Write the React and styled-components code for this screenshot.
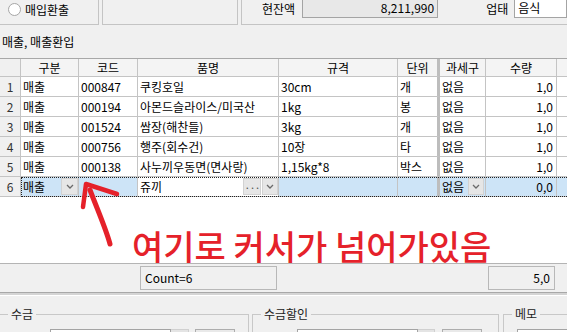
import React from "react";
import styled, { createGlobalStyle } from "styled-components";

const GlobalStyle = createGlobalStyle`
  html, body {
    margin: 0;
    padding: 0;
    background: #f0f0f0;
  }
  body {
    font-family: "Noto Sans CJK KR", "Liberation Sans", sans-serif;
    font-size: 12px;
    color: #000;
  }
`;

const COLS = "58px 59px 141px 119px 42px 46px 71px 30px";

const Page = styled.div`
  width: 567px;
  height: 332px;
  overflow: hidden;
  display: flex;
  flex-direction: column;
  background: #f0f0f0;
`;

const TopStrip = styled.div`
  display: flex;
  gap: 3px;
  height: 25px;
  flex: none;
`;

const TopBox = styled.div`
  box-sizing: border-box;
  height: 25px;
  width: ${(p) => (p.$w ? `${p.$w}px` : "auto")};
  flex: ${(p) => (p.$w ? "none" : "1")};
  border-bottom: 1px solid #c4c4c4;
  border-right: ${(p) => (p.$noRight ? "none" : "1px solid #c4c4c4")};
  border-left: ${(p) => (p.$noLeft ? "none" : "1px solid #c4c4c4")};
  display: flex;
  align-items: center;
  padding: 0 0 ${(p) => p.$pb || 0}px ${(p) => p.$pl || 0}px;
`;

const Radio = styled.span`
  width: 11px;
  height: 11px;
  border-radius: 50%;
  border: 1px solid #a6a6a6;
  background: #fff;
  margin-right: 4px;
`;

const Label = styled.span`
  white-space: nowrap;
  margin-left: ${(p) => p.$ml || 0}px;
  margin-right: ${(p) => p.$mr || 0}px;
`;

const TopInput = styled.div`
  box-sizing: border-box;
  height: 20px;
  width: ${(p) => (p.$w ? `${p.$w}px` : "auto")};
  flex: ${(p) => (p.$w ? "none" : "1")};
  border: 1px solid #a4a4a4;
  background: ${(p) => (p.$gray ? "#e8e8e8" : "#fff")};
  text-align: ${(p) => (p.$right ? "right" : "left")};
  padding: 0 3px;
  line-height: 18px;
`;

const SectionTitle = styled.div`
  height: 33px;
  line-height: 34px;
  padding-left: 2px;
  flex: none;
`;

const GridArea = styled.div`
  position: relative;
  box-sizing: border-box;
  height: 205px;
  flex: none;
  background: #fff;
  border-top: 1px solid #a8a8a8;
  overflow: hidden;
`;

const Row = styled.div`
  display: flex;
  height: ${(p) => p.$h}px;
`;

const RowNum = styled.div`
  box-sizing: border-box;
  width: 21px;
  flex: none;
  background: #f0f0f0;
  border-right: 1px solid #c4c4c4;
  border-bottom: 1px solid #c4c4c4;
  text-align: center;
  color: #333;
  line-height: 19px;
`;

const Cells = styled.div`
  display: grid;
  grid-template-columns: ${COLS};
  flex: none;
  background: ${(p) => p.$bg || "transparent"};
  outline: ${(p) => (p.$focus ? "1px dotted #222" : "none")};
  outline-offset: -1px;
`;

const Cell = styled.div`
  box-sizing: border-box;
  display: flex;
  align-items: center;
  justify-content: ${(p) =>
    p.$align === "right" ? "flex-end" : p.$align === "center" ? "center" : "flex-start"};
  padding: ${(p) => (p.$align === "right" ? "0 3px 0 2px" : p.$btn ? "0 0 0 2px" : "0 2px")};
  border-right: ${(p) => (p.$thick ? "3px solid #bdbdbd" : "1px solid #c4c4c4")};
  border-bottom: 1px solid #c4c4c4;
  background: ${(p) => p.$bg || "transparent"};
  white-space: nowrap;
  overflow: hidden;
  min-width: 0;
`;

const HeadCell = styled(Cell)`
  background: #f4f4f4;
  justify-content: center;
`;

const CellText = styled.span`
  flex: 1;
  overflow: hidden;
`;

const DropBtn = styled.span`
  box-sizing: border-box;
  flex: none;
  width: ${(p) => p.$w || 17}px;
  height: 17px;
  margin-left: ${(p) => p.$ml || 0}px;
  margin-right: ${(p) => p.$mr || 0}px;
  background: #e6e6e6;
  border: 1px solid #d2d2d2;
  display: flex;
  align-items: center;
  justify-content: center;
  color: #555;
  font-size: 11px;
  letter-spacing: -1px;
`;

const Chevron = () => (
  <svg width="8" height="5" viewBox="0 0 8 5">
    <polyline points="1,1 4,4 7,1" fill="none" stroke="#6a6a6a" strokeWidth="1.3" />
  </svg>
);

const Annotation = styled.div`
  position: absolute;
  left: 132px;
  top: 172px;
  font-size: 34px;
  line-height: 30px;
  color: #e5212a;
  font-weight: 500;
  white-space: nowrap;
`;

const ArrowSvg = styled.svg`
  position: absolute;
  left: 0;
  top: 0;
`;

const FooterBar = styled.div`
  display: flex;
  box-sizing: border-box;
  height: 28px;
  flex: none;
  border-top: 1px solid #b4b4b4;
  padding-top: 2px;
`;

const FooterCells = styled.div`
  display: grid;
  grid-template-columns: ${COLS};
  margin-left: 21px;
`;

const SumBox = styled.div`
  box-sizing: border-box;
  height: 24px;
  margin: 0 2px;
  border: 1px solid #b8b8b8;
  line-height: 22px;
  padding: 0 4px;
  text-align: ${(p) => (p.$right ? "right" : "left")};
  grid-column: ${(p) => p.$col};
`;

const Divider = styled.div`
  height: 2px;
  flex: none;
  margin-top: 1px;
  border-top: 1px solid #a8a8a8;
  border-bottom: 1px solid #fff;
  background: #d4d4d4;
`;

const Groups = styled.div`
  display: flex;
  margin-top: 10px;
  margin-left: -2px;
`;

const Group = styled.fieldset`
  box-sizing: border-box;
  margin: 0 ${(p) => p.$mr || 0}px 0 0;
  width: ${(p) => (p.$w ? `${p.$w}px` : "auto")};
  flex: ${(p) => (p.$w ? "none" : "1")};
  min-width: 0;
  height: 80px;
  border: 1px solid #c8c8c8;
  padding: 7px 0 0 ${(p) => p.$pl || 8}px;
`;

const Legend = styled.legend`
  padding: 0 3px;
  margin-left: 0;
  line-height: 16px;
  color: #222;
`;

const FieldRow = styled.div`
  display: flex;
  align-items: center;
  padding-left: ${(p) => p.$pl || 0}px;
`;

const FieldInput = styled.div`
  box-sizing: border-box;
  height: 20px;
  width: ${(p) => (p.$w ? `${p.$w}px` : "auto")};
  flex: ${(p) => (p.$w ? "none" : "1")};
  border: 1px solid #a4a4a4;
  background: #fff;
  padding: 0 3px;
  line-height: 18px;
  white-space: nowrap;
`;

const FieldDrop = styled.div`
  box-sizing: border-box;
  width: ${(p) => p.$w}px;
  height: 20px;
  background: #e4e4e4;
  border: 1px solid #d0d0d0;
  border-left: none;
`;

const FieldButton = styled.div`
  box-sizing: border-box;
  width: 40px;
  height: 20px;
  margin-left: ${(p) => p.$ml}px;
  border: 1px solid #adadad;
  background: #e9e9e9;
`;

const rows = [
  ["매출", "000847", "쿠킹호일", "30cm", "개", "없음", "1,0"],
  ["매출", "000194", "아몬드슬라이스/미국산", "1kg", "봉", "없음", "1,0"],
  ["매출", "001524", "쌈장(해찬들)", "3kg", "개", "없음", "1,0"],
  ["매출", "000756", "행주(회수건)", "10장", "타", "없음", "1,0"],
  ["매출", "000138", "사누끼우동면(면사랑)", "1,15kg*8", "박스", "없음", "1,0"],
];

const headers = ["구분", "코드", "품명", "규격", "단위", "과세구", "수량", ""];

export default function App() {
  return (
    <Page>
      <GlobalStyle />
      <TopStrip>
        <TopBox $w={99} $noLeft $pl={8} $pb={6}>
          <Radio />
          <Label>매입환출</Label>
        </TopBox>
        <TopBox $w={136} />
        <TopBox $noRight $pl={20} $pb={8}>
          <Label $mr={7}>현잔액</Label>
          <TopInput $w={136} $gray $right>
            8,211,990
          </TopInput>
          <Label $ml={48} $mr={6}>
            업태
          </Label>
          <TopInput>음식</TopInput>
        </TopBox>
      </TopStrip>

      <SectionTitle>매출, 매출환입</SectionTitle>

      <GridArea>
        <Row $h={18}>
          <RowNum />
          <Cells>
            {headers.map((h, i) => (
              <HeadCell key={i} $thick={i === 4}>
                {h}
              </HeadCell>
            ))}
          </Cells>
        </Row>
        {rows.map((r, i) => (
          <Row $h={20} key={i}>
            <RowNum>{i + 1}</RowNum>
            <Cells>
              {r.map((v, j) => (
                <Cell key={j} $thick={j === 4} $align={j === 6 ? "right" : "left"}>
                  {v}
                </Cell>
              ))}
              <Cell />
            </Cells>
          </Row>
        ))}
        <Row $h={20}>
          <RowNum>6</RowNum>
          <Cells $bg="#cde4f7" $focus>
            <Cell $btn>
              <CellText>매출</CellText>
              <DropBtn>
                <Chevron />
              </DropBtn>
            </Cell>
            <Cell />
            <Cell $bg="#fff" $btn>
              <CellText>쥬끼</CellText>
              <DropBtn $w={18}>···</DropBtn>
              <DropBtn $ml={1} $w={16}>
                <Chevron />
              </DropBtn>
            </Cell>
            <Cell />
            <Cell $thick />
            <Cell $btn>
              <CellText>없음</CellText>
              <DropBtn $w={16} $mr={1}>
                <Chevron />
              </DropBtn>
            </Cell>
            <Cell $align="right">0,0</Cell>
            <Cell />
          </Cells>
        </Row>

        <ArrowSvg width="140" height="205" viewBox="0 58 140 205">
          <path
            d="M110 243 C 106 228, 98 210, 90 189"
            fill="none"
            stroke="#e5212a"
            strokeWidth="5"
            strokeLinecap="round"
          />
          <path
            d="M83 206 L86 183 L117 193"
            fill="none"
            stroke="#e5212a"
            strokeWidth="4.5"
            strokeLinecap="round"
            strokeLinejoin="round"
          />
        </ArrowSvg>
        <Annotation>여기로 커서가 넘어가있음</Annotation>
      </GridArea>

      <FooterBar>
        <FooterCells>
          <SumBox $col="3">Count=6</SumBox>
          <SumBox $col="7" $right>
            5,0
          </SumBox>
        </FooterCells>
      </FooterBar>
      <Divider />

      <Groups>
        <Group $w={251} $mr={3} $pl={9}>
          <Legend>수금</Legend>
          <FieldRow>
            <Label $mr={9}>장부명</Label>
            <FieldInput $w={121}>이재수(농협) 입금</FieldInput>
            <FieldDrop $w={18} />
            <FieldButton $ml={6} />
          </FieldRow>
        </Group>
        <Group $w={247} $mr={4}>
          <Legend>수금할인</Legend>
          <FieldRow $pl={11}>
            <Label $mr={3}>할인</Label>
            <FieldInput $w={121}>에누리</FieldInput>
            <FieldDrop $w={17} />
            <FieldButton $ml={7} />
          </FieldRow>
        </Group>
        <Group style={{ marginRight: -10 }}>
          <Legend>메모</Legend>
          <FieldRow $pl={5}>
            <FieldInput />
          </FieldRow>
        </Group>
      </Groups>
    </Page>
  );
}
